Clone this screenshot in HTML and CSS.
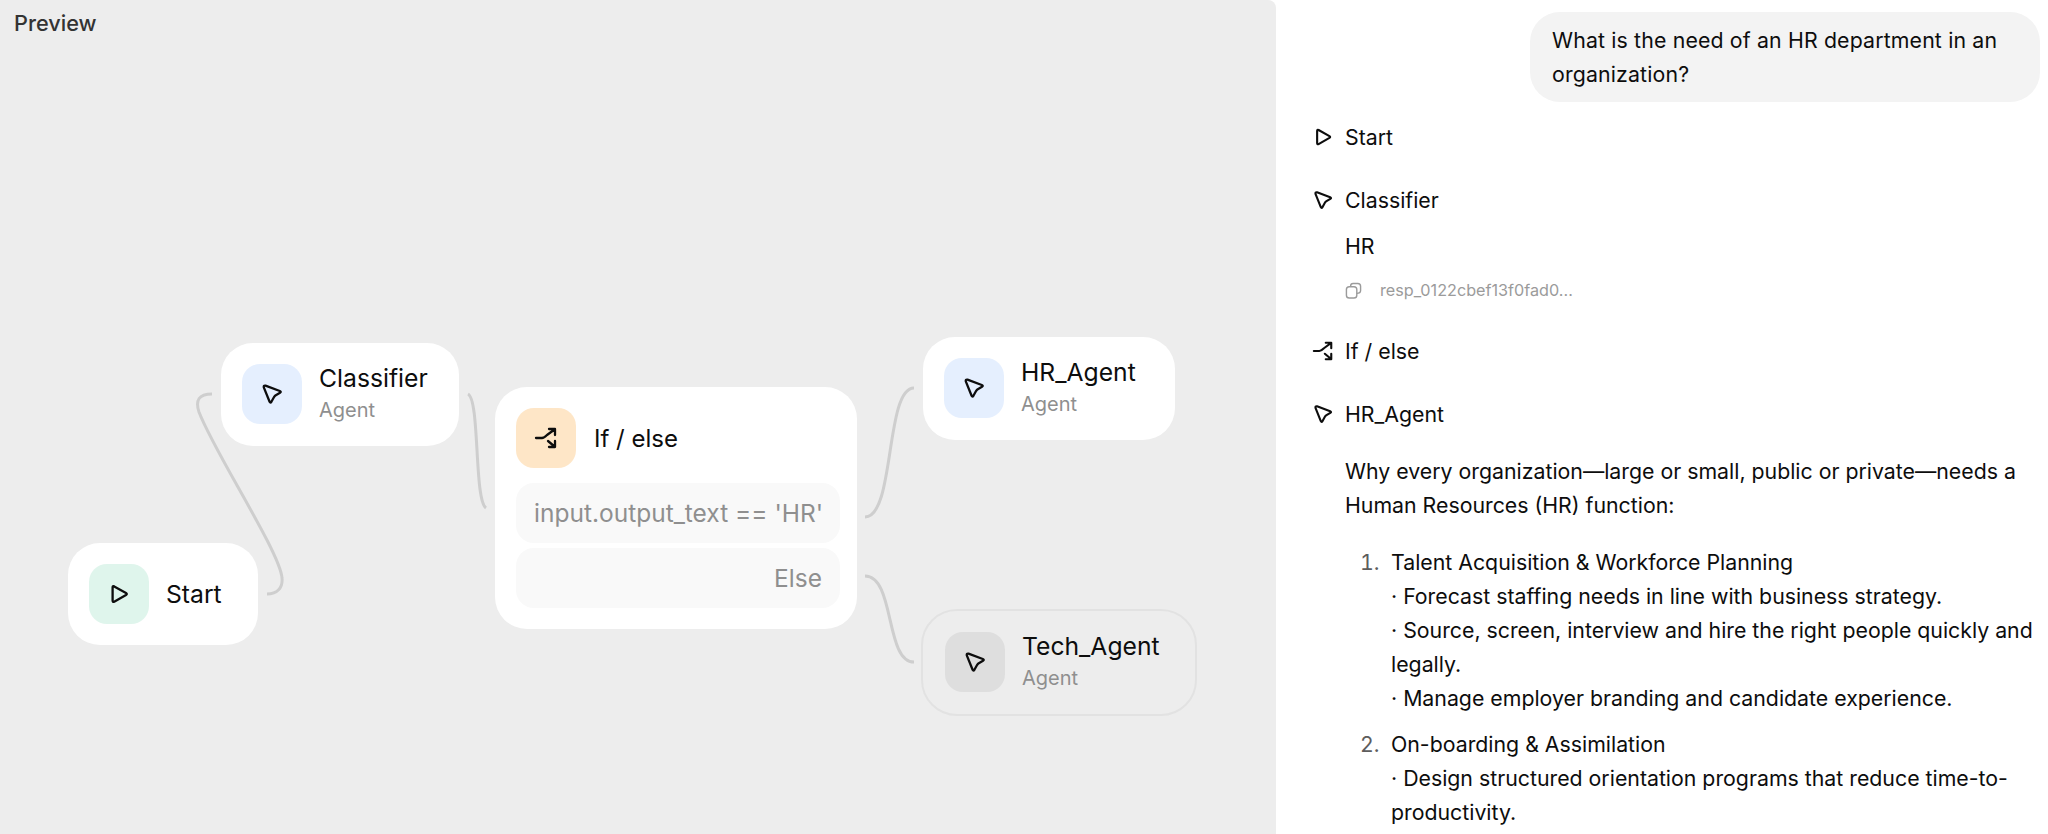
FILE: index.html
```html
<!DOCTYPE html>
<html lang="en">
<head>
<meta charset="utf-8">
<title>Preview</title>
<link rel="stylesheet" href="styles.css">
</head>
<body>
<svg class="defs" width="0" height="0" aria-hidden="true">
  <symbol id="i-play" viewBox="0 0 24 24"><path d="M7.200 4.400 19 11Q20.600 12 19 13L7.200 19.700Q5.600 20.400 5.600 18.600V5.400Q5.600 3.600 7.200 4.400Z"/></symbol>
  <symbol id="i-agent" viewBox="0 0 24 24"><path d="M5.500 3.600 19.800 9Q21.600 9.800 20 10.700L15.800 13.200Q14.800 13.800 14.200 14.800L11.400 19.800Q10.400 21.400 9.600 19.800L3.800 5.400Q3.400 3.200 5.500 3.600Z"/></symbol>
  <symbol id="i-branch" viewBox="0 0 24 24"><path d="M2 12H8C10 12 11 11 13 9L20.500 3.500M15 3H21V9M14 15 20.500 20.500M21 15V21H15"/></symbol>
</svg>
<main class="app">
  <section class="canvas">
    <h1 class="canvas-title">Preview</h1>
    <svg class="edges" width="1276" height="834" viewBox="0 0 1276 834" aria-hidden="true">
      <path d="M267 594C277 594 283 588 282 578C280 552 214 452 199 412C195 400 199 394 212 394"/>
      <path d="M468 394C480 400 474 500 486 508"/>
      <path d="M865 517C895 517 885 388 914 388"/>
      <path d="M865 576C895 576 885 662 914 662"/>
    </svg>
    <div class="node node-start">
      <span class="tile tile-green"><svg class="glyph"><use href="#i-play"/></svg></span>
      <div class="node-text"><div class="node-name">Start</div></div>
    </div>
    <div class="node node-classifier">
      <span class="tile tile-blue"><svg class="glyph"><use href="#i-agent"/></svg></span>
      <div class="node-text"><div class="node-name">Classifier</div><div class="node-kind">Agent</div></div>
    </div>
    <div class="node node-ifelse">
      <div class="ifelse-head">
        <span class="tile tile-orange"><svg class="glyph"><use href="#i-branch"/></svg></span>
        <div class="node-name">If / else</div>
      </div>
      <div class="cond">input.output_text == 'HR'</div>
      <div class="cond cond-else">Else</div>
    </div>
    <div class="node node-hr">
      <span class="tile tile-blue"><svg class="glyph"><use href="#i-agent"/></svg></span>
      <div class="node-text"><div class="node-name">HR_Agent</div><div class="node-kind">Agent</div></div>
    </div>
    <div class="node node-tech">
      <span class="tile tile-grey"><svg class="glyph"><use href="#i-agent"/></svg></span>
      <div class="node-text"><div class="node-name">Tech_Agent</div><div class="node-kind">Agent</div></div>
    </div>
  </section>
  <section class="chat">
    <div class="bubble">What is the need of an HR department in an organization?</div>
    <div class="step step-first"><svg class="step-icon"><use href="#i-play"/></svg><span>Start</span></div>
    <div class="step"><svg class="step-icon"><use href="#i-agent"/></svg><span>Classifier</span></div>
    <div class="step-body">
      <p class="answer">HR</p>
      <div class="resp">
        <svg class="copy" viewBox="0 0 18 18"><rect x="1.500" y="5" width="11" height="12" rx="3"/><path d="M6 5V4C6 2.500 7 1.500 8.500 1.500H13.500C15.300 1.500 16.500 2.700 16.500 4.500V9C16.500 10.800 15 12 12.500 12"/></svg>
        <span>resp_0122cbef13f0fad0...</span>
      </div>
    </div>
    <div class="step"><svg class="step-icon"><use href="#i-branch"/></svg><span>If / else</span></div>
    <div class="step"><svg class="step-icon"><use href="#i-agent"/></svg><span>HR_Agent</span></div>
    <div class="step-body">
      <p class="intro">Why every organization—large or small, public or private—needs a Human Resources (HR) function:</p>
      <ol class="list">
        <li>Talent Acquisition &amp; Workforce Planning<br>· Forecast staffing needs in line with business strategy.<br>· Source, screen, interview and hire the right people quickly and legally.<br>· Manage employer branding and candidate experience.</li>
        <li>On-boarding &amp; Assimilation<br>· Design structured orientation programs that reduce time-to-productivity.</li>
      </ol>
    </div>
  </section>
</main>
</body>
</html>
```
FILE: styles.css
```css
* { box-sizing: border-box; }
html, body { margin: 0; height: 100%; }
body {
  overflow: hidden;
  background: #fff;
  color: #0d0d0d;
  font-family: Inter, "Liberation Sans", sans-serif;
  font-size: 21.300px;
  line-height: 34px;
}
.defs { position: absolute; }
.app { display: flex; height: 834px; overflow: hidden; }

.canvas {
  position: relative;
  flex: 0 0 1276px;
  background: #ededed;
  border-top-right-radius: 8px;
}
.canvas-title {
  margin: 0;
  padding: 7px 14px;
  font-size: 21.700px;
  line-height: 32px;
  font-weight: 500;
  color: #333;
}
.edges { position: absolute; left: 0; top: 0; }
.edges path { fill: none; stroke: #cecece; stroke-width: 3; stroke-linecap: butt; }

.node {
  position: absolute;
  display: flex;
  align-items: center;
  gap: 17px;
  padding: 21px;
  background: #fff;
  border-radius: 32px;
}
.node-start { left: 68px; top: 543px; width: 190px; }
.node-classifier { left: 221px; top: 343px; width: 238px; padding-bottom: 22px; }
.node-hr { left: 923px; top: 337px; width: 252px; padding-bottom: 22px; }
.node-tech {
  left: 921px; top: 609px;
  width: 276px;
  padding: 21px 21px 22px 22px;
  background: transparent;
  border: 2px solid #e2e2e2;
  border-radius: 36px;
}
.node-ifelse {
  left: 495px; top: 387px;
  width: 362px;
  display: block;
  padding: 21px 17px 21px 21px;
  border-radius: 32px;
}
.ifelse-head { display: flex; align-items: center; gap: 18px; margin-bottom: 15px; }
.ifelse-head .node-name { padding-top: 2px; font-size: 24px; }

.tile {
  flex: none;
  display: flex;
  align-items: center;
  justify-content: center;
  width: 60px;
  height: 60px;
  border-radius: 18px;
}
.tile-green { background: #dff5ec; }
.tile-blue { background: #e5effe; }
.tile-orange { background: #fee6c7; }
.tile-grey { background: #dedede; }
.glyph, .step-icon {
  fill: none;
  stroke: #0d0d0d;
  stroke-width: 2.300;
  stroke-linejoin: round;
  stroke-linecap: round;
}
.glyph { width: 24px; height: 24px; }

.node-text {
  display: flex;
  flex-direction: column;
  justify-content: center;
  height: 60px;
  padding-bottom: 2px;
}
.node-start .node-text { padding-bottom: 0; }
.node-name { font-size: 24.700px; line-height: 34px; color: #0d0d0d; white-space: nowrap; }
.node-kind { font-size: 20px; line-height: 30px; color: #8f8f8f; }

.cond {
  height: 60px;
  padding: 0 18px;
  background: #f9f9f9;
  border-radius: 18px;
  font-size: 24.500px;
  line-height: 60px;
  color: #8f8f8f;
  white-space: nowrap;
}
.cond-else { margin-top: 5px; text-align: right; }

.chat {
  flex: 1;
  min-width: 0;
  padding: 12px 8px 0 36px;
}
.bubble {
  width: 510px;
  margin-left: auto;
  padding: 11px 22px;
  background: #f3f3f3;
  border-radius: 30px;
  letter-spacing: 0.150px;
}
.step { display: flex; align-items: center; gap: 11px; margin-top: 29px; }
.step-first { margin-top: 18px; }
.step-icon { flex: none; width: 22px; height: 22px; }
.step-body { padding-left: 33px; margin-top: 12px; }
.step-body p { margin: 0; }
.step-body + .step { margin-top: 32px; }
.resp {
  display: flex;
  align-items: center;
  gap: 18px;
  margin-top: 15px;
  height: 24px;
  font-size: 16.200px;
  color: #9b9b9b;
}
.copy {
  width: 17px;
  height: 17px;
  fill: none;
  stroke: #9b9b9b;
  stroke-width: 1.500;
}
.step-body .intro { margin-top: 23px; }
.list { margin: 23px 0 0; padding: 0 0 0 46px; }
.list li { margin-bottom: 12px; }
.list li::marker { color: #5d5d5d; content: counter(list-item) ".  "; }
```
